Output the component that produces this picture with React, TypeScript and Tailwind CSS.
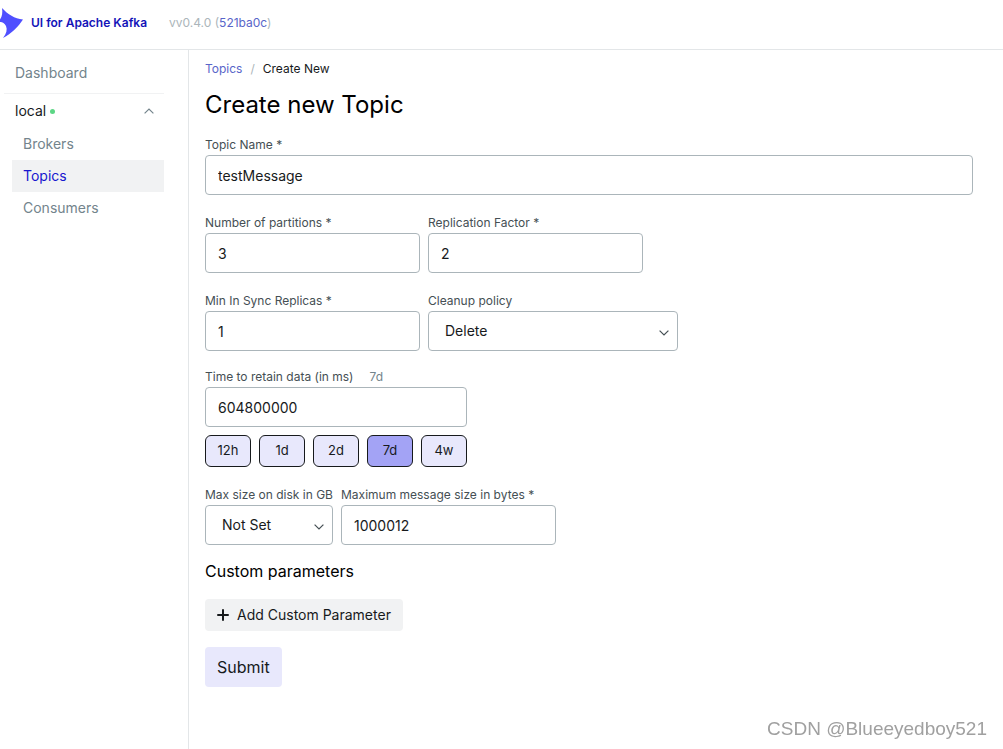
import React from "react"

interface FieldProps {
	id: string
	label: string
	hint?: string
	className?: string
	children: React.ReactNode
}

const Field: React.FC<FieldProps> = ({ id, label, hint, className = "", children }) => {
	return (
		<div className={`flex flex-col ${className}`}>
			<div className="flex gap-4 text-xs leading-5 whitespace-nowrap">
				<label htmlFor={id} className="text-[#454f54]">
					{label}
				</label>
				{hint && <span className="text-[#73848c]">{hint}</span>}
			</div>
			{children}
		</div>
	)
}

const TextInput: React.FC<{ id: string; value: string }> = ({ id, value }) => {
	return (
		<input
			id={id}
			type="text"
			defaultValue={value}
			className="h-10 w-full rounded border border-[#abb5ba] px-3 text-sm text-[#171a1c]"
		/>
	)
}

const SelectInput: React.FC<{ id: string; options: string[] }> = ({ id, options }) => {
	return (
		<div className="relative">
			<select
				id={id}
				className="block h-10 w-full appearance-none rounded border border-[#abb5ba] bg-white px-4 text-sm text-[#171a1c]"
			>
				{options.map((option) => (
					<option key={option}>{option}</option>
				))}
			</select>
			<svg
				className="pointer-events-none absolute top-[19px] right-[9px] h-1.5 w-2.5"
				viewBox="0 0 10 6"
				fill="none"
				stroke="#454f54"
				strokeWidth="1.2"
			>
				<path d="M0.6 0.6L5 5L9.4 0.6" />
			</svg>
		</div>
	)
}

const Header = () => {
	return (
		<header className="flex h-[50px] items-center border-b border-[#e3e6e8] pb-1">
			<a href="#" className="flex items-center gap-2 text-xs font-semibold text-[#1414b8]">
				<svg className="h-[30px] w-[23px]" viewBox="0 0 23 30" fill="#4f4fff">
					<path d="M2 0C8 6.5 14.5 10.5 23 11.5C18.5 18.5 11.5 25.5 3 30C6.5 25.5 7.5 21.5 6 18C4.5 15 2 13.7 0 14V11.5C2.3 8.5 2.7 4.5 2 0Z" />
				</svg>
				UI for Apache Kafka
			</a>
			<div className="ml-[22px] text-xs text-[#abb5ba]">
				vv0.4.0 (
				<a href="#" className="text-[#5865c9]">
					521ba0c
				</a>
				)
			</div>
		</header>
	)
}

const Sidebar = () => {
	return (
		<nav className="w-[189px] shrink-0 border-r border-[#e3e6e8] py-2 pr-6 pl-1 text-sm text-[#73848c]">
			<a href="#" className="flex h-[35px] items-center pb-1.5 pl-[11px]">
				Dashboard
			</a>
			<button
				type="button"
				className="flex h-[35px] w-full items-center border-t border-[#f1f2f3] pr-2.5 pl-[11px] text-[#171a1c]"
			>
				local
				<span className="ml-1 size-[5px] rounded-full bg-[#5cd685]" />
				<svg className="ml-auto h-1.5 w-2.5" viewBox="0 0 10 6" fill="none" stroke="#73848c" strokeWidth="1.2">
					<path d="M0.6 5.4L5 1L9.4 5.4" />
				</svg>
			</button>
			<div className="flex flex-col pl-2">
				<a href="#" className="flex h-8 items-center pl-[11px]">
					Brokers
				</a>
				<a href="#" className="flex h-8 items-center bg-[#f1f2f3] pl-[11px] text-[#1717cf]">
					Topics
				</a>
				<a href="#" className="flex h-8 items-center pl-[11px]">
					Consumers
				</a>
			</div>
		</nav>
	)
}

const retention = ["12h", "1d", "2d", "7d", "4w"]

const App = () => {
	return (
		<div className="flex min-h-screen flex-col bg-white font-['Inter',sans-serif] text-[#171a1c]">
			<Header />
			<div className="flex flex-1">
				<Sidebar />
				<main className="flex-1 pt-2.5 pr-[30px] pl-4">
					<div className="flex gap-2 text-xs leading-[18px]">
						<a href="#" className="text-[#5865c9]">
							Topics
						</a>
						<span className="text-[#abb5ba]">/</span>
						<span>Create New</span>
					</div>
					<h1 className="mt-[11px] text-2xl text-black">Create new Topic</h1>
					<form className="mt-3.5 flex flex-col gap-[18px]">
						<Field id="name" label="Topic Name *">
							<TextInput id="name" value="testMessage" />
						</Field>
						<div className="flex gap-2">
							<Field id="partitions" label="Number of partitions *" className="w-[215px]">
								<TextInput id="partitions" value="3" />
							</Field>
							<Field id="replication" label="Replication Factor *" className="w-[215px]">
								<TextInput id="replication" value="2" />
							</Field>
						</div>
						<div className="flex gap-2">
							<Field id="replicas" label="Min In Sync Replicas *" className="w-[215px]">
								<TextInput id="replicas" value="1" />
							</Field>
							<Field id="cleanup" label="Cleanup policy" className="w-[250px]">
								<SelectInput id="cleanup" options={["Delete", "Compact", "Compact,Delete"]} />
							</Field>
						</div>
						<div className="-mt-0.5 flex w-[262px] flex-col gap-2">
							<Field id="retain" label="Time to retain data (in ms)" hint="7d">
								<TextInput id="retain" value="604800000" />
							</Field>
							<div className="flex gap-2">
								{retention.map((time) => (
									<button
										key={time}
										type="button"
										className={`h-8 flex-1 rounded-md border border-[#171a1c] text-[13px] ${
											time === "7d" ? "bg-[#a3a3f5]" : "bg-[#e8e8fc]"
										}`}
									>
										{time}
									</button>
								))}
							</div>
						</div>
						<div className="flex gap-2">
							<Field id="disk" label="Max size on disk in GB" className="w-32">
								<SelectInput id="disk" options={["Not Set", "1 GB", "10 GB", "20 GB", "50 GB"]} />
							</Field>
							<Field id="message" label="Maximum message size in bytes *" className="w-[215px]">
								<TextInput id="message" value="1000012" />
							</Field>
						</div>
						<div className="-mt-1 flex flex-col items-start gap-4">
							<h2 className="text-base text-black">Custom parameters</h2>
							<button
								type="button"
								className="flex h-8 items-center gap-2 rounded bg-[#f1f2f3] px-3 text-sm"
							>
								<svg className="size-3" viewBox="0 0 12 12" stroke="#171a1c" strokeWidth="2" strokeLinecap="round">
									<path d="M6 1V11M1 6H11" />
								</svg>
								Add Custom Parameter
							</button>
							<button type="submit" className="h-10 rounded bg-[#e8e8fc] px-3 text-base">
								Submit
							</button>
						</div>
					</form>
				</main>
			</div>
			<div className="fixed right-4 bottom-1.5 font-['Liberation_Sans',sans-serif] text-[19px] text-[#a0a0a0]">
				CSDN @Blueeyedboy521
			</div>
		</div>
	)
}

export default App
